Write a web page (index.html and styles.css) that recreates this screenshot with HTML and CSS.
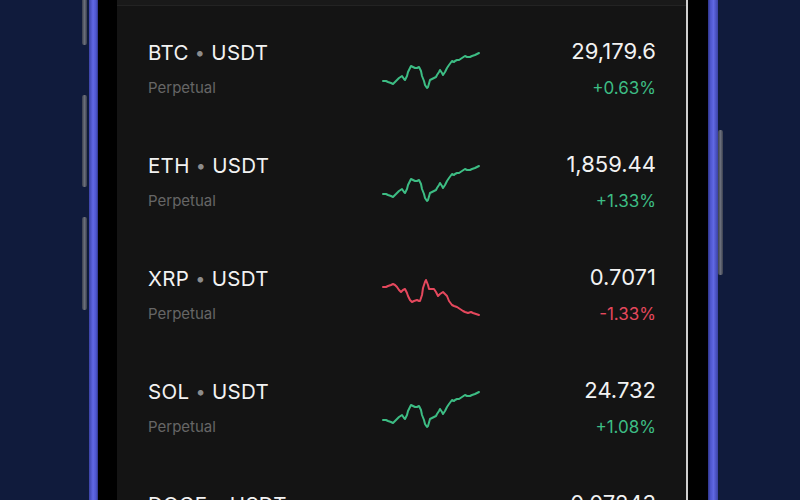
FILE: index.html
```html
<!DOCTYPE html>
<html lang="en">
<head>
    <meta charset="UTF-8">
    <meta name="viewport" content="width=device-width, initial-scale=1.0">
    <title>Markets</title>
    <link rel="stylesheet" href="styles.css">
</head>
<body>
    <div class="scene">
        <div class="keys keys-left">
            <span class="key key-a"></span>
            <span class="key key-b"></span>
            <span class="key key-c"></span>
        </div>
        <div class="edge"></div>
        <div class="bezel bezel-left"></div>
        <div class="screen">
            <div class="topbar"></div>
            <div id="list"></div>
        </div>
        <div class="bezel bezel-right"></div>
        <div class="edge edge-right"></div>
        <div class="keys keys-right">
            <span class="key key-power"></span>
        </div>
    </div>

    <script>
        const up = '2,31 5,31 7,32 10,33 12,34 14,32 16,30 18,28 21,26 23,29 24,30 26,26 27,22 29,18 30,16 32,17 34,18 36,18 38,17 40,21 41,26 43,31 44,35 46,38 47,37 49,30 51,29 53,28 55,27 56,25 58,22 59,20 61,23 62,25 64,22 66,18 68,15 71,11 73,12 74,11 76,10 78,10 81,8 84,6 86,7 89,7 91,6 94,5 96,4 98,3';
        const down = '2,11 5,11 7,10 10,9 12,8 14,9 16,11 18,14 20,16 22,14 24,13 26,17 27,20 29,24 31,26 33,25 36,24 38,25 39,25 41,19 42,12 44,6 45,4 47,9 48,13 50,13 53,13 55,16 57,20 59,18 62,16 64,18 66,20 68,25 71,29 73,30 76,31 79,33 82,35 84,36 87,37 90,36 92,37 95,38 98,39';

        const markets = [
            { base: 'BTC', price: '29,179.6', change: '+0.63%', line: up },
            { base: 'ETH', price: '1,859.44', change: '+1.33%', line: up },
            { base: 'XRP', price: '0.7071', change: '-1.33%', line: down },
            { base: 'SOL', price: '24.732', change: '+1.08%', line: up },
            { base: 'DOGE', price: '0.07243', change: '+0.91%', line: up }
        ];

        const list = document.getElementById('list');
        markets.forEach(m => {
            const neg = m.change.startsWith('-');
            const row = document.createElement('div');
            row.className = 'row';
            row.innerHTML = `
                <div class="pair">
                    <div class="name">${m.base} <span class="dot">&bull;</span> USDT</div>
                    <div class="kind">Perpetual</div>
                </div>
                <svg class="spark ${neg ? 'neg' : 'pos'}" width="100" height="42" viewBox="0 0 100 42">
                    <polyline points="${m.line}" />
                </svg>
                <div class="quote">
                    <div class="price">${m.price}</div>
                    <div class="change ${neg ? 'neg' : 'pos'}">${m.change}</div>
                </div>
            `;
            list.appendChild(row);
        });
    </script>
</body>
</html>
```

FILE: styles.css
```css
body { margin: 0; background: #101b3c; font-family: Inter, "Noto Sans", sans-serif; overflow: hidden; }
.scene { display: flex; height: 500px; margin-left: 82px; }

.keys { display: flex; flex-direction: column; width: 6px; }
.keys-left { margin-right: 1px; }
.key { display: block; width: 5px; background: linear-gradient(90deg, #3a3f4e, #6a6e7a 50%, #3a3f4e); border-radius: 2px; }
.key-a { height: 45px; border-radius: 0 0 2px 2px; }
.key-b { height: 92px; margin-top: 50px; }
.key-c { height: 93px; margin-top: 30px; }
.key-power { height: 145px; margin-top: 130px; }

.edge { width: 9px; background: linear-gradient(90deg, #3b42a6, #6068e4 45%, #4d55cc 80%, #2e3488); }
.edge-right { width: 10px; background: linear-gradient(90deg, #2e3488, #4d55cc 25%, #6068e4 55%, #3b42a6); }
.bezel { background: #000; }
.bezel-left { width: 19px; }
.bezel-right { width: 20px; }

.screen { width: 569px; background: #141414; border-right: 2px solid #cfcfcf; overflow: hidden; }
.topbar { height: 5px; background: #191919; border-bottom: 1px solid #232323; }

.row { display: flex; align-items: center; height: 58px; padding: 33px 30px 22px 31px; }
.pair { flex: 1; }
.name { font-size: 20.5px; line-height: 25px; color: #f2f2f2; letter-spacing: 0.3px; }
.dot { color: #8c8c8c; font-size: 18px; vertical-align: 1px; }
.kind { margin-top: 13px; font-size: 15px; line-height: 19px; color: #666; }

.spark { margin-right: 57px; margin-top: 6px; }
.spark polyline { fill: none; stroke-width: 2; stroke-linejoin: round; stroke-linecap: round; }
.spark.pos polyline { stroke: #3dbd84; }
.spark.neg polyline { stroke: #e5485d; }

.quote { width: 118px; text-align: right; }
.price { font-size: 22px; line-height: 25px; color: #f2f2f2; }
.change { margin-top: 14px; font-size: 17px; line-height: 20px; }
.change.pos { color: #3dbd84; }
.change.neg { color: #e5485d; }
```
